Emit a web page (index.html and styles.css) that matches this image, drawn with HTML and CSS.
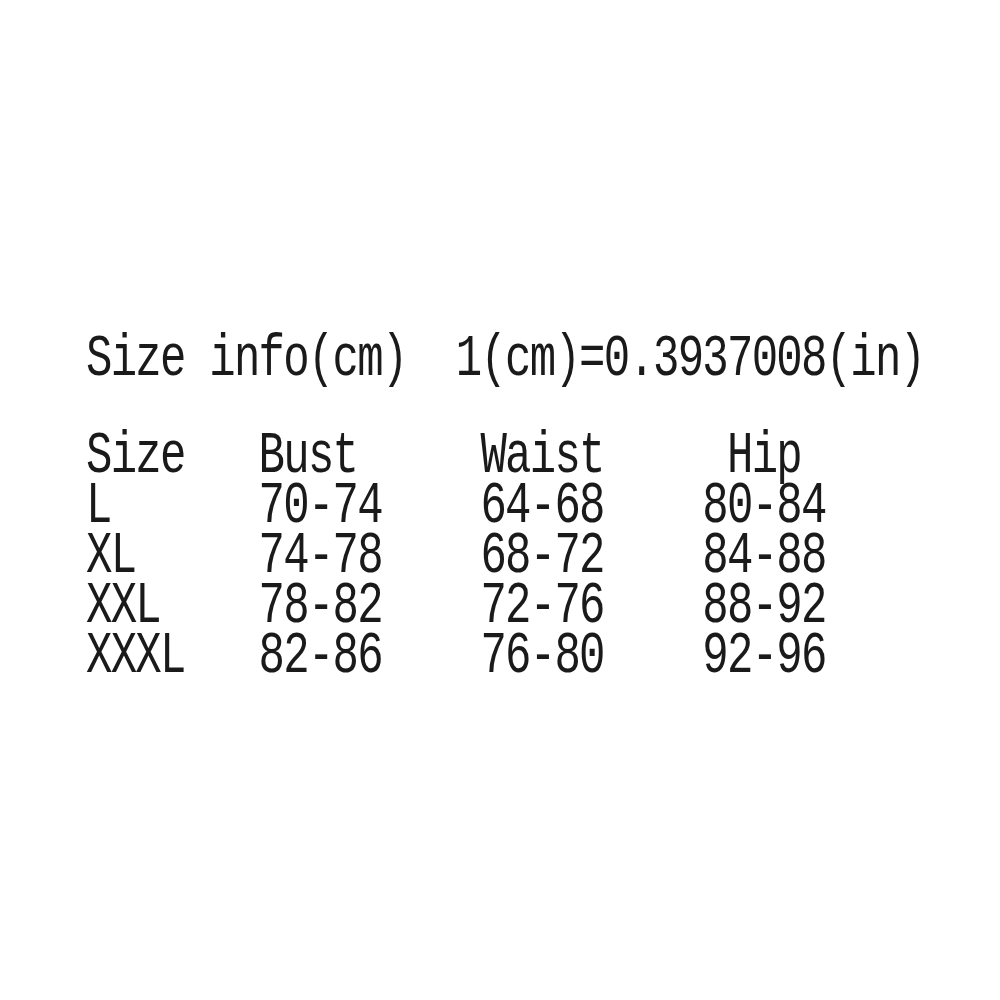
FILE: index.html
```html
<!DOCTYPE html>
<html>
<head>
<meta charset="utf-8">
<link rel="stylesheet" href="styles.css">
</head>
<body>
<div class="page">
  <div class="chart">
    <div class="title">Size info(cm)  1(cm)=0.3937008(in)</div>
    <pre class="table">Size   Bust     Waist     Hip
L      70-74    64-68    80-84
XL     74-78    68-72    84-88
XXL    78-82    72-76    88-92
XXXL   82-86    76-80    92-96</pre>
  </div>
</div>
</body>
</html>
```
FILE: styles.css
```css
html, body {
  margin: 0;
  padding: 0;
  background: #ffffff;
}
.page {
  width: 1000px;
  height: 1000px;
  box-sizing: border-box;
  padding: 334px 0 0 86px;
  overflow: hidden;
}
.chart {
  transform: scaleY(1.35);
  transform-origin: 0 0;
  font-family: "Liberation Mono", monospace;
  font-size: 44px;
  letter-spacing: -1.75px;
  line-height: 37px;
  color: #1a1a1a;
}
.title {
  white-space: pre;
}
.table {
  margin: 35px 0 0 0;
  font: inherit;
  white-space: pre;
}
```
